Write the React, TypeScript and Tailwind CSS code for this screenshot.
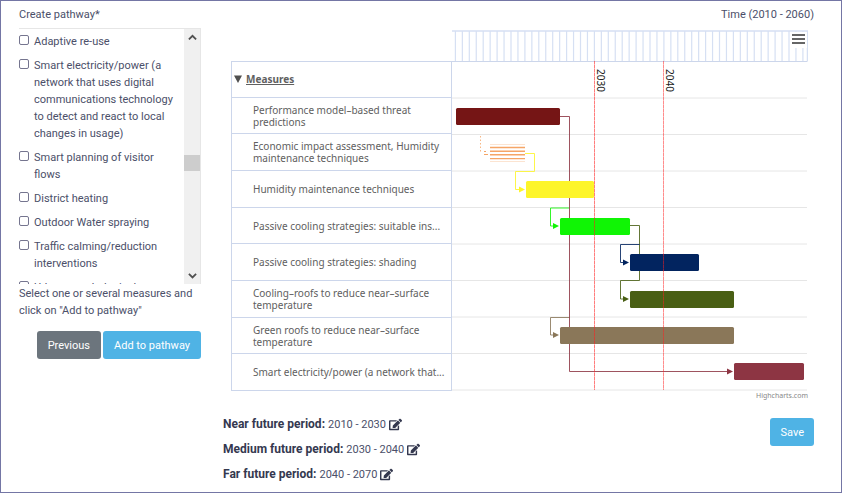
import { FaEdit } from 'react-icons/fa';
import { useState } from 'react';

const measures = [
  'Adaptive re-use',
  'Smart electricity/power (a network that uses digital communications technology to detect and react to local changes in usage)',
  'Smart planning of visitor flows',
  'District heating',
  'Outdoor Water spraying',
  'Traffic calming/reduction interventions',
  'Urban morphological changes',
];

const rows = [
  'Performance model–based threat predictions',
  'Economic impact assessment, Humidity maintenance techniques',
  'Humidity maintenance techniques',
  'Passive cooling strategies: suitable ins...',
  'Passive cooling strategies: shading',
  'Cooling–roofs to reduce near–surface temperature',
  'Green roofs to reduce near–surface temperature',
  'Smart electricity/power (a network that...',
];

const bars = [
  { x: 4, y: 78, w: 104, color: '#751515' },
  { x: 74, y: 151, w: 68, color: '#fdf52a' },
  { x: 108, y: 188, w: 70, color: '#10f505' },
  { x: 178, y: 224, w: 69, color: '#02245f' },
  { x: 178, y: 261, w: 104, color: '#495f14' },
  { x: 108, y: 297, w: 174, color: '#8a7759' },
  { x: 282, y: 333, w: 70, color: '#8d3543' },
];

const links = [
  { d: 'M117.5 178H98.5V196H103', color: '#10f505', tip: [108, 196] },
  { d: 'M117.5 287.5H98.5V305H103', color: '#8a7759', tip: [108, 305] },
  { d: 'M108 86.5H117.5V341.5H276', color: '#8d3543', tip: [282, 341.5] },
  { d: 'M73 123.5H82.5V141.5H63.5V159.5H68', color: '#fdf52a', tip: [74, 159.5] },
  { d: 'M178 195.5H187.5V250.5H168.5V269H173', color: '#495f14', tip: [178, 269] },
  { d: 'M187.5 214.5H168.5V232.5H173', color: '#02245f', tip: [178, 232.5] },
];

const periods = [
  { name: 'Near future period', range: '2010 - 2030' },
  { name: 'Medium future period', range: '2030 - 2040' },
  { name: 'Far future period', range: '2040 - 2070' },
];

function MeasureList() {
  return (
    <div className="mt-[5px] flex h-64 border border-[#e6e6e6] border-b-0 border-l-0">
      <ul className="flex-1 space-y-[7px] overflow-hidden pt-1">
        {measures.map((name) => (
          <li key={name}>
            <label className="flex items-start gap-[5px]">
              <input
                type="checkbox"
                className="mt-[2px] size-[10px] shrink-0 appearance-none rounded-xs border border-[#75758f] bg-white checked:bg-[#4fb3e5]"
              />
              <span className="mr-1">{name}</span>
            </label>
          </li>
        ))}
      </ul>
      <div className="flex w-4 shrink-0 flex-col bg-[#f0f0f0]">
        <button type="button" aria-label="Scroll up" className="flex h-4 items-center justify-center">
          <svg viewBox="0 0 10 7" className="w-[9px]" fill="none" stroke="#505050" strokeWidth="2">
            <path d="M1 6l4-4 4 4" />
          </svg>
        </button>
        <div className="flex flex-1 flex-col">
          <div className="grow-[110]" />
          <div className="h-4 bg-[#cdcdcd]" />
          <div className="grow-[97]" />
        </div>
        <button type="button" aria-label="Scroll down" className="flex h-4 items-center justify-center">
          <svg viewBox="0 0 10 7" className="w-[9px]" fill="none" stroke="#505050" strokeWidth="2">
            <path d="M1 1l4 4 4-4" />
          </svg>
        </button>
      </div>
    </div>
  );
}

function Plot() {
  return (
    <svg viewBox="0 0 356 361" className="block w-full" role="img" aria-label="Pathway timeline">
      {/* Year axis */}
      <g stroke="#d6e0f3" strokeWidth="1">
        <path d="M0 1H355.5V31" fill="none" strokeWidth="1.5" />
        {Array.from({ length: 51 }, (_, i) => (
          <path key={i} d={`M${3.4 + i * 6.95} 1V31`} strokeWidth="1.2" />
        ))}
      </g>
      <path d="M0 31.5H355.5" stroke="#ccd6eb" />

      {/* Row lines */}
      {Array.from({ length: 9 }, (_, i) => (
        <path key={i} d={`M0 ${68 + i * 36.5}H355`} stroke="#e6e6e6" />
      ))}

      {links.map(({ d, color, tip: [x, y] }) => (
        <g key={d}>
          <path d={d} fill="none" stroke={color} strokeOpacity="0.85" />
          <path d={`M${x - 7} ${y - 3}L${x - 1} ${y}L${x - 7} ${y + 3}Z`} fill={color} />
        </g>
      ))}

      {/* Striped task */}
      <g stroke="#f5a566">
        <path d="M28.5 106V122" strokeDasharray="1.5 2" strokeOpacity="0.8" />
        <path d="M32 121.5H34M32 124.5H36" strokeWidth="1.2" />
        <path d="M38 114.5H73M38 131.5H73" strokeOpacity="0.3" />
        <path d="M38 117.5H73M38 121.3H73M38 124.8H73M38 128.6H73" strokeWidth="1.4" />
      </g>

      {bars.map((b) => (
        <rect key={`${b.x}-${b.y}`} x={b.x} y={b.y} width={b.w} height="17" rx="1.5" fill={b.color} />
      ))}

      <g stroke="#ff2020">
        <path d="M142.5 31V360M211.5 31V360" strokeOpacity="0.35" />
        <path d="M142.5 31V360" strokeOpacity="0.35" strokeDasharray="3 1" />
        <path d="M211.5 31V360" strokeOpacity="0.25" strokeDasharray="3 1" />
      </g>
      <g fontSize="10" fill="#222">
        <text transform="translate(145 39) rotate(90)">2030</text>
        <text transform="translate(214 39) rotate(90)">2040</text>
      </g>
    </svg>
  );
}

function Chart() {
  const [open, setOpen] = useState(true);

  return (
    <div className="ml-[8px] mr-[6px] font-['Noto_Sans','Open_Sans',sans-serif] text-[10px] leading-[12px] text-[#606060]">
      <div className="relative flex">
        <div className="grid w-[221px] shrink-0 grid-rows-[310fr_repeat(9,366fr)]">
          <div />
          <div className="flex items-center border border-[#ccd6eb] pl-[2px]">
            <button type="button" onClick={() => setOpen(!open)} className="flex items-center gap-1">
              <svg viewBox="0 0 8 8" className="w-2" fill="#505050">
                <path d="M0 0.5H8L4 8Z" />
              </svg>
              <span className="font-bold underline">Measures</span>
            </button>
          </div>
          {rows.map((row) => (
            <div key={row} className="flex items-center border border-t-0 border-[#ccd6eb] pl-[21px]">
              <span className="flex-1">{open && row}</span>
            </div>
          ))}
        </div>
        <div className="min-w-0 flex-1">
          <Plot />
        </div>
        <button
          type="button"
          aria-label="Chart menu"
          className="absolute right-px top-[2px] flex h-4 w-[17px] flex-col items-center justify-start gap-[2px] bg-white pt-[2px]"
        >
          <span className="h-[2px] w-[13px] bg-[#666]" />
          <span className="h-[2px] w-[13px] bg-[#666]" />
          <span className="h-[2px] w-[13px] bg-[#666]" />
        </button>
      </div>
      <div className="text-right text-[7px] leading-[9px] text-[#888]">
        <a href="#highcharts">Highcharts.com</a>
      </div>
    </div>
  );
}

export default function App() {
  return (
    <main className="flex min-h-screen gap-[22px] border border-[#7476a5] bg-white py-[5px] pl-[18px] pr-[27px] font-['Roboto',sans-serif] text-[11px] leading-[17px] text-[#4b4f69]">
      <aside className="w-[182px] shrink-0">
        <h2>Create pathway*</h2>
        <MeasureList />
        <p className="mt-px">Select one or several measures and click on "Add to pathway"</p>
        <div className="mt-3 flex justify-end gap-[2px] text-white">
          <button type="button" className="h-7 rounded-[3px] bg-[#6c757d] px-[11px]">
            Previous
          </button>
          <button type="button" className="h-7 rounded-[3px] bg-[#4fb3e5] px-[11px]">
            Add to pathway
          </button>
        </div>
      </aside>

      <section className="min-w-0 flex-1">
        <p className="mb-[7px] text-right">Time (2010 - 2060)</p>
        <Chart />
        <div className="mt-4 flex items-start justify-between">
          <ul className="space-y-2">
            {periods.map((p) => (
              <li key={p.name} className="flex items-center gap-[3px]">
                <b className="text-[12px] text-[#34384f]">{p.name}:</b>
                {p.range}
                <button type="button" aria-label={`Edit ${p.name}`} className="text-[#34384f]">
                  <FaEdit size={13} />
                </button>
              </li>
            ))}
          </ul>
          <button type="button" className="mt-[2px] h-7 rounded-[3px] bg-[#4fb3e5] px-[10px] text-white">
            Save
          </button>
        </div>
      </section>
    </main>
  );
}
